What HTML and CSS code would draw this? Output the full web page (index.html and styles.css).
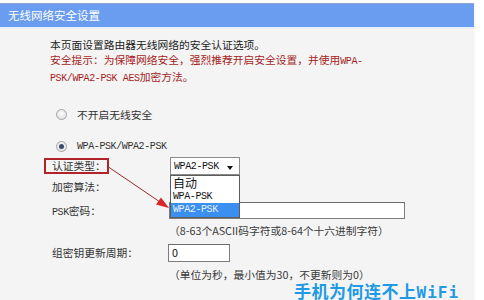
FILE: index.html
```html
<!DOCTYPE html>
<html lang="zh-CN">
<head>
<meta charset="utf-8">
<title>无线网络安全设置</title>
<link rel="stylesheet" href="styles.css">
</head>
<body>
<div class="page">
  <div class="panel">
    <div class="header">无线网络安全设置</div>
    <div class="content">
      <p class="intro">本页面设置路由器无线网络的安全认证选项。</p>
      <p class="warn">安全提示：为保障网络安全，强烈推荐开启安全设置，并使用<span class="mono">WPA-</span><br><span class="mono">PSK/WPA2-PSK AES</span>加密方法。</p>

      <div class="radio-row first">
        <span class="radio"></span>
        <span class="radio-text">不开启无线安全</span>
      </div>
      <div class="radio-row">
        <span class="radio checked"></span>
        <span class="radio-text mono">WPA-PSK/WPA2-PSK</span>
      </div>

      <div class="form">
        <div class="row row-auth">
          <div class="label"><span class="boxed">认证类型：</span></div>
          <div class="field">
            <div class="select">
              <span class="mono">WPA2-PSK</span>
              <span class="caret"></span>
              <ul class="options">
                <li>自动</li>
                <li class="mono">WPA-PSK</li>
                <li class="mono active">WPA2-PSK</li>
              </ul>
            </div>
          </div>
        </div>
        <div class="row row-enc">
          <div class="label">加密算法：</div>
          <div class="field"></div>
        </div>
        <div class="row row-psk">
          <div class="label"><span class="mono">PSK</span>密码：</div>
          <div class="field"><div class="input wide"></div></div>
        </div>
        <div class="row hint hint-1">
          <div class="label"></div>
          <div class="field">（8-63个ASCII码字符或8-64个十六进制字符）</div>
        </div>
        <div class="row row-group">
          <div class="label">组密钥更新周期：</div>
          <div class="field"><div class="input short">0</div></div>
        </div>
        <div class="row hint hint-2">
          <div class="label"></div>
          <div class="field">（单位为秒，最小值为30，不更新则为0）</div>
        </div>
      </div>
    </div>
  </div>

  <svg class="arrow" width="484" height="300" viewBox="0 0 484 300" xmlns="http://www.w3.org/2000/svg">
    <line x1="107" y1="166" x2="160" y2="202" stroke="#9a2a2a" stroke-width="1"/>
    <polygon points="169,208 156,204.5 161,197.5" fill="#d8262a"/>
  </svg>

  <div class="watermark">手机为何连不上<span class="wm-latin">WiFi</span></div>
</div>
</body>
</html>
```

FILE: styles.css
```css
html, body {
  margin: 0;
  padding: 0;
  background: #ffffff;
}

body {
  font-family: "Noto Sans CJK SC", "Noto Sans", sans-serif;
  font-size: 10.75px;
  color: #222;
}

.page {
  position: relative;
  width: 484px;
  height: 300px;
  overflow: hidden;
}

.panel {
  margin-top: 3px;
  width: 476px;
  height: 297px;
  background: #f4f4f4;
  border-right: 2px solid #fbfbfb;
  box-sizing: border-box;
}

.header {
  height: 26px;
  line-height: 23px;
  padding-left: 8px;
  background: #6a9cf0;
  border-top: 1px solid #8aa6cf;
  border-bottom: 2px solid #e7f0fb;
  box-sizing: border-box;
  color: #ffffff;
  font-size: 11.5px;
}

.content {
  padding: 8px 0 0 50px;
}

.intro, .warn {
  margin: 0;
  line-height: 15px;
}

.warn {
  color: #a51e1e;
}

.mono {
  font-family: "Liberation Mono", "DejaVu Sans Mono", monospace;
  font-size: 10px;
  letter-spacing: -0.4px;
}

.radio-row {
  display: flex;
  align-items: center;
  height: 16px;
  margin-top: 16px;
  padding-left: 6px;
}

.radio-row.first {
  margin-top: 20px;
}

.radio {
  width: 11px;
  height: 11px;
  border-radius: 50%;
  border: 1px solid #a4a4a4;
  box-sizing: border-box;
  background: radial-gradient(circle at 50% 40%, #ffffff 0%, #e4e4e4 70%, #d0d0d0 100%);
  display: flex;
  align-items: center;
  justify-content: center;
}

.radio.checked::after {
  content: "";
  width: 5px;
  height: 5px;
  border-radius: 50%;
  background: #3b4a66;
}

.radio-text {
  margin-left: 10px;
  color: #333;
}

.form {
  margin-left: 2px;
  margin-top: 3px;
}

.row {
  display: flex;
  align-items: center;
}

.label {
  width: 118px;
  flex: none;
  color: #333;
}

.field {
  flex: 1;
  display: flex;
  align-items: center;
}

.row-auth { height: 18px; }
.row-enc { height: 22px; }
.row-psk { height: 17px; margin-top: 5px; }
.hint-1 { height: 16px; margin-top: 3px; }
.row-group { height: 17px; margin-top: 6px; }
.hint-2 { height: 14px; margin-top: 6px; }

.hint .field {
  color: #3a3a3a;
  margin-left: -1px;
}

.boxed {
  display: inline-block;
  border: 2px solid #b3242a;
  padding: 0 0 0 6px;
  margin-left: -8px;
  line-height: 12px;
  width: 55px;
}

.select {
  position: relative;
  width: 70px;
  height: 18px;
  box-sizing: border-box;
  border: 1px solid #8a8a8a;
  background: #ffffff;
  display: flex;
  align-items: center;
  padding-left: 3px;
  color: #111;
}

.caret {
  position: absolute;
  right: 6px;
  top: 8px;
  width: 0;
  height: 0;
  border-left: 3px solid transparent;
  border-right: 3px solid transparent;
  border-top: 4px solid #111;
}

.options {
  position: absolute;
  left: -1px;
  top: 17px;
  width: 70px;
  margin: 0;
  padding: 0;
  list-style: none;
  background: #ffffff;
  border: 1px solid #5c5c5c;
  box-sizing: border-box;
  z-index: 2;
}

.options li {
  height: 13px;
  line-height: 13px;
  padding-left: 2px;
  color: #111;
}

.options li:first-child {
  height: 14px;
  line-height: 14px;
  font-size: 12px;
}

.options li.active {
  height: 14px;
  line-height: 14px;
  background: #3a8ff0;
  color: #e8f2ff;
}

.input {
  height: 17px;
  box-sizing: border-box;
  border: 1px solid #7d7d7d;
  border-top-color: #6a6a6a;
  background: #ffffff;
  padding-left: 3px;
  line-height: 15px;
  color: #111;
}

.input.wide {
  width: 236px;
  margin-left: -1px;
}

.input.short {
  width: 62px;
  margin-left: -2px;
  height: 18px;
}

.arrow {
  position: absolute;
  left: 0;
  top: 0;
  pointer-events: none;
  z-index: 3;
}

.watermark {
  position: absolute;
  left: 294px;
  top: 282px;
  font-size: 17px;
  font-weight: bold;
  line-height: 17px;
  color: #1f9ae4;
  letter-spacing: 0.5px;
  white-space: nowrap;
}

.wm-latin {
  font-family: "DejaVu Sans Mono", monospace;
  font-size: 16px;
  letter-spacing: 1px;
}
```
